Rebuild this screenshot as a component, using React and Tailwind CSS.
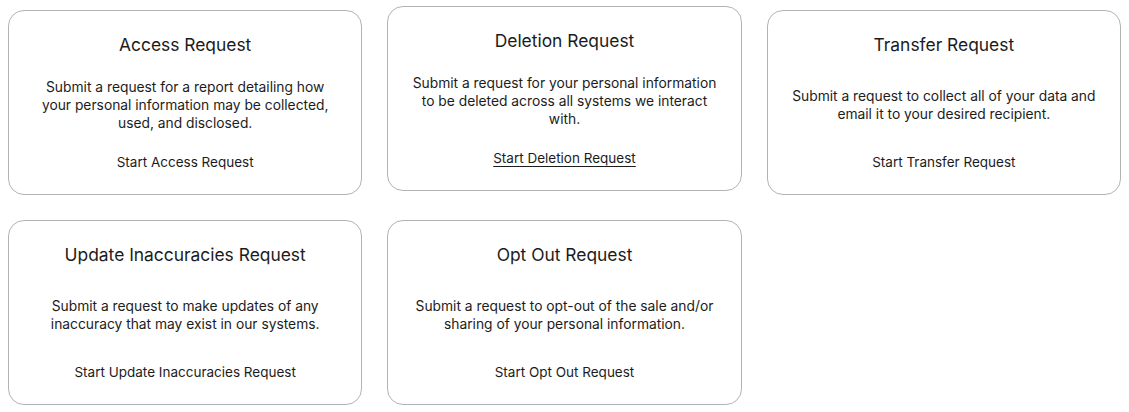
import React from "react";

const cards = [
  {
    title: "Access Request",
    lines: ["Submit a request for a report detailing how", "your personal information may be collected,", "used, and disclosed."],
    link: "Start Access Request",
  },
  {
    title: "Deletion Request",
    lines: ["Submit a request for your personal information", "to be deleted across all systems we interact", "with."],
    link: "Start Deletion Request",
    hover: true,
  },
  {
    title: "Transfer Request",
    lines: ["Submit a request to collect all of your data and", "email it to your desired recipient."],
    link: "Start Transfer Request",
  },
  {
    title: "Update Inaccuracies Request",
    lines: ["Submit a request to make updates of any", "inaccuracy that may exist in our systems."],
    link: "Start Update Inaccuracies Request",
  },
  {
    title: "Opt Out Request",
    lines: ["Submit a request to opt-out of the sale and/or", "sharing of your personal information."],
    link: "Start Opt Out Request",
  },
];

export default function App() {
  return (
    <div
      className="w-[1129px] h-[412px] bg-white px-2 pt-[10px] text-[#1c1c1c]"
      style={{ fontFamily: "Inter, 'Noto Sans', sans-serif" }}
    >
      <div className="grid grid-cols-3 gap-x-[25px] gap-y-[25px]">
        {cards.map((c) => (
          <div
            key={c.title}
            className={
              "h-[185px] rounded-2xl border border-[#b3b3b3] bg-white flex flex-col justify-between items-center text-center px-5 pt-5 pb-[22px] " +
              (c.hover ? "-translate-y-1" : "")
            }
          >
            <h2 className="text-[17.4px] leading-[28px] font-normal">{c.title}</h2>
            <p className="text-[13.8px] leading-[18px] -mt-[2px]">
              {c.lines.map((l, i) => (
                <span key={i} className="block whitespace-nowrap">{l}</span>
              ))}
            </p>
            <a
              href="#"
              className={"text-[13.5px] leading-[20px] " + (c.hover ? "underline underline-offset-[3px]" : "no-underline")}
            >
              {c.link}
            </a>
          </div>
        ))}
      </div>
    </div>
  );
}
